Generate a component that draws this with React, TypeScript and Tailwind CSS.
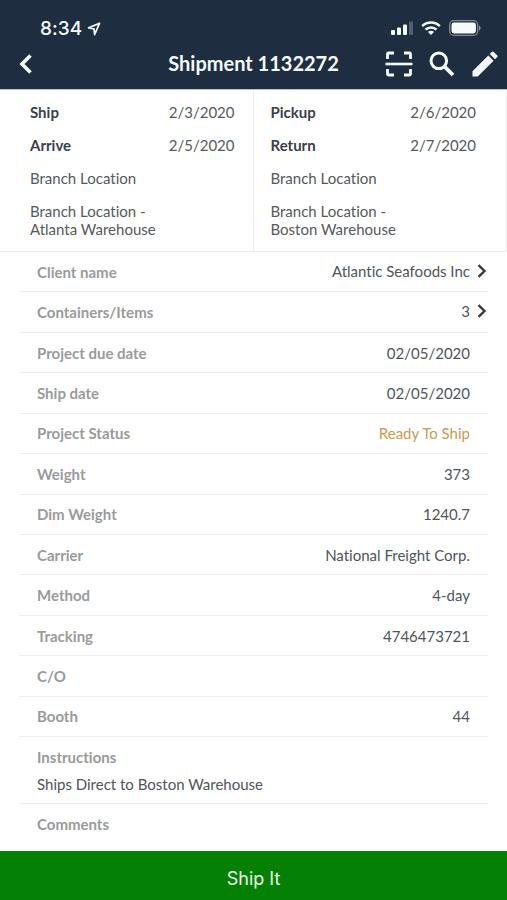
import type { ReactNode } from "react";

type Leg = { dates: [string, string][]; place: string; address: string };

const legs: Leg[] = [
  {
    dates: [["Ship", "2/3/2020"], ["Arrive", "2/5/2020"]],
    place: "Branch Location",
    address: "Branch Location - Atlanta Warehouse",
  },
  {
    dates: [["Pickup", "2/6/2020"], ["Return", "2/7/2020"]],
    place: "Branch Location",
    address: "Branch Location - Boston Warehouse",
  },
];

type Field = { label: string; value: string; link?: boolean; accent?: boolean };

const fields: Field[] = [
  { label: "Client name", value: "Atlantic Seafoods Inc", link: true },
  { label: "Containers/Items", value: "3", link: true },
  { label: "Project due date", value: "02/05/2020" },
  { label: "Ship date", value: "02/05/2020" },
  { label: "Project Status", value: "Ready To Ship", accent: true },
  { label: "Weight", value: "373" },
  { label: "Dim Weight", value: "1240.7" },
  { label: "Carrier", value: "National Freight Corp." },
  { label: "Method", value: "4-day" },
  { label: "Tracking", value: "4746473721" },
  { label: "C/O", value: "" },
  { label: "Booth", value: "44" },
];

function StatusBar() {
  return (
    <div className="flex h-10 items-end justify-between pr-[26px] pl-10">
      <div className="flex items-center gap-[5px]">
        <span className="pt-px font-['Inter',sans-serif] text-[19px] leading-[22px] font-medium">8:34</span>
        <svg viewBox="0 0 14 14" className="size-[14px]" fill="none" stroke="currentColor" strokeWidth="1.7" strokeLinejoin="round" aria-hidden="true">
          <path d="M12.6 1.2 1.6 5.900l5.400 1 .6 5.700z" />
        </svg>
      </div>
      <div className="flex h-6 items-center gap-2">
        <svg viewBox="0 0 22 14" className="h-[14px] w-[22px]" fill="currentColor" aria-hidden="true">
          <rect x="0" y="9" width="4" height="5" rx="1" />
          <rect x="6" y="6.5" width="4" height="7.5" rx="1" />
          <rect x="12" y="3.5" width="4" height="10.5" rx="1" />
          <rect x="18" y="0.5" width="4" height="13.5" rx="1" opacity="0.25" />
        </svg>
        <svg viewBox="0 0 20 14" className="h-[14px] w-5" fill="none" stroke="currentColor" strokeWidth="2.6" aria-hidden="true">
          <path d="M1.2 5.2a12.4 12.4 0 0 1 17.6 0M4.5 8.7a7.8 7.8 0 0 1 11 0" />
          <path d="M10 14 7 11a4.2 4.2 0 0 1 6 0z" fill="currentColor" stroke="none" />
        </svg>
        <svg viewBox="0 0 32 16" className="h-4 w-8" aria-hidden="true">
          <rect x="0.7" y="0.7" width="28" height="14.6" rx="4" fill="none" stroke="currentColor" strokeWidth="1.3" opacity="0.45" />
          <rect x="2.5" y="2.5" width="24.4" height="11" rx="2.4" fill="currentColor" />
          <path d="M30 5.4c2 .8 2 4.4 0 5.2z" fill="currentColor" opacity="0.5" />
        </svg>
      </div>
    </div>
  );
}

function IconButton({ label, children }: { label: string; children: ReactNode }) {
  return (
    <button type="button" aria-label={label} className="flex size-7 items-center justify-center">
      {children}
    </button>
  );
}

function NavBar() {
  return (
    <div className="grid h-[49px] grid-cols-[1fr_auto_1fr] items-center px-2 pb-[2px]">
      <div className="pl-1">
        <IconButton label="Back">
          <svg viewBox="0 0 14 20" className="h-5 w-[14px]" fill="none" stroke="currentColor" strokeWidth="3.6" aria-hidden="true">
            <path d="m11.5 1.5-8.500 8.500 8.500 8.500" />
          </svg>
        </IconButton>
      </div>
      <h1 className="pb-[2px] text-[20px] leading-6 font-bold">Shipment 1132272</h1>
      <div className="flex items-center justify-end gap-[15px]">
        <IconButton label="Scan">
          <svg viewBox="0 0 28 26" className="h-[26px] w-7" fill="none" stroke="currentColor" strokeWidth="2.8" aria-hidden="true">
            <path d="M2.500 8V3Q2.500 2 3.500 2H9M19 2h5.500q1 0 1 1v5M2.500 18v5q0 1 1 1H9M19 24h5.500q1 0 1-1v-5" />
            <path d="M.5 13h27" strokeWidth="2.6" />
          </svg>
        </IconButton>
        <IconButton label="Search">
          <svg viewBox="0 0 26 26" className="size-[26px]" fill="none" stroke="currentColor" aria-hidden="true">
            <circle cx="9.8" cy="9.8" r="7.8" strokeWidth="3" />
            <path d="m15.300 15.300 8.700 8.700" strokeWidth="3.8" />
          </svg>
        </IconButton>
        <IconButton label="Edit">
          <svg viewBox="0 0 26 26" className="size-[26px]" fill="currentColor" aria-hidden="true">
            <path d="M.5 25.500v-5.300L16.300 4.400l5.300 5.300L5.800 25.500zM17.700 3l2.100-2.100q1-1 2 0l3.300 3.300q1 1 0 2L23 8.300z" />
          </svg>
        </IconButton>
      </div>
    </div>
  );
}

function LegCard({ leg, first }: { leg: Leg; first: boolean }) {
  return (
    <section
      className={
        "flex flex-col gap-[15px] border-r border-b border-[#eeeff1] py-[13px] text-[15px] leading-[18px] text-[#555a60] " +
        (first ? "pr-[18px] pl-[30px]" : "pr-[30px] pl-[17px]")
      }
    >
      {leg.dates.map(([name, date]) => (
        <div key={name} className="flex justify-between">
          <span className="font-bold text-[#3a3f49]">{name}</span>
          <span>{date}</span>
        </div>
      ))}
      <p>{leg.place}</p>
      <p className="max-w-36">{leg.address}</p>
    </section>
  );
}

function Chevron() {
  return (
    <svg viewBox="0 0 10 14" className="h-[14px] w-[10px] text-[#34383e]" fill="none" stroke="currentColor" strokeWidth="2.3" aria-hidden="true">
      <path d="m1.500 1.200 6 5.800-6 5.800" />
    </svg>
  );
}

function FieldRow({ field }: { field: Field }) {
  return (
    <div className="flex shrink-0 grow basis-10 items-center justify-between border-b border-[#efefef] pl-[18px]">
      <dt className="font-bold text-[#999b9c]">{field.label}</dt>
      {field.link ? (
        <dd className="pr-[1px] pb-[2px]">
          <a href="#" className="flex items-center gap-[7px]">
            {field.value}
            <Chevron />
          </a>
        </dd>
      ) : (
        <dd className={field.accent ? "pr-[18px] text-[#d0984f]" : "pr-[18px]"}>{field.value}</dd>
      )}
    </div>
  );
}

export default function App() {
  return (
    <div className="flex min-h-screen flex-col bg-white font-['Lato',sans-serif] [font-variant-ligatures:none]">
      <header className="border-b border-[#b9c4d3] bg-[#1e2d3f] text-[#f4fafd]">
        <StatusBar />
        <NavBar />
      </header>
      <main className="flex grow flex-col">
        <div className="grid grid-cols-2">
          {legs.map((leg, i) => (
            <LegCard key={leg.address} leg={leg} first={i === 0} />
          ))}
        </div>
        <dl className="mx-[19px] flex grow flex-col text-[15px] leading-[18px] text-[#4f555b]">
          {fields.map((field) => (
            <FieldRow key={field.label} field={field} />
          ))}
          <div className="flex flex-col gap-[9px] border-b border-[#efefef] px-[18px] pt-[11px] pb-[10px]">
            <dt className="font-bold text-[#999b9c]">Instructions</dt>
            <dd>Ships Direct to Boston Warehouse</dd>
          </div>
          <div className="px-[18px] pt-[11px] pb-[18px]">
            <dt className="font-bold text-[#999b9c]">Comments</dt>
          </div>
        </dl>
      </main>
      <button type="button" className="w-full bg-[#048104] pt-4 pb-[9px] font-['Inter',sans-serif] text-[18px] leading-6 text-[#eefbea]">
        Ship It
      </button>
    </div>
  );
}
